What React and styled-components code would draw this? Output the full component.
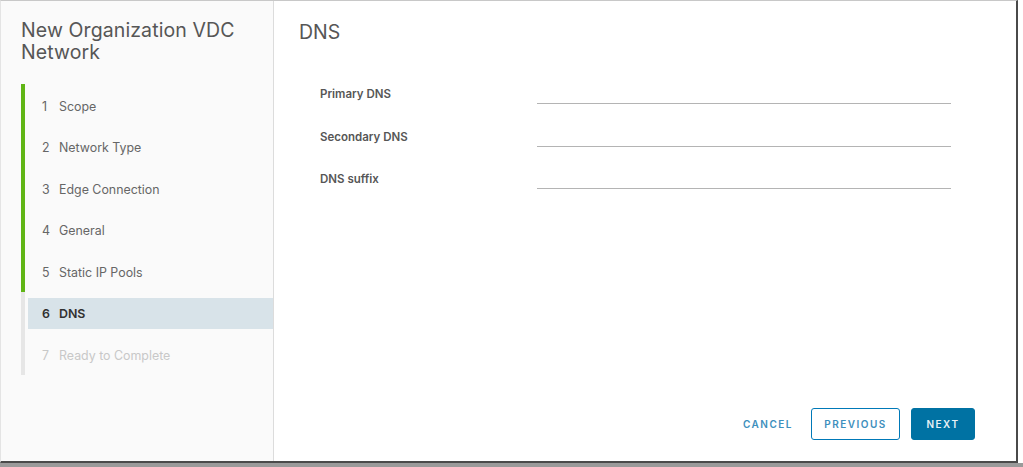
import styled, { createGlobalStyle } from 'styled-components';

const GlobalStyle = createGlobalStyle`
  html, body {
    margin: 0;
    padding: 0;
    background: #ffffff;
  }
  body {
    font-family: Inter, "Noto Sans", sans-serif;
    color: #565656;
  }
`;

const Page = styled.div`
  width: 1023px;
  height: 467px;
  overflow: hidden;
  background: linear-gradient(to bottom, #ffffff 0, #ffffff 463px, #9a9a9a 463px);
`;

const Modal = styled.div`
  display: flex;
  width: 1015px;
  height: 460px;
  background: #ffffff;
  border-top: 1px solid #c8c8c8;
  border-left: 1px solid #e4e4e4;
  border-right: 2px solid #4a4a4a;
  border-bottom: 2px solid #4a4a4a;
`;

const Sidebar = styled.nav`
  width: 252px;
  flex-shrink: 0;
  padding: 18px 0 0 20px;
  background: #fafafa;
  border-right: 1px solid #dcdcdc;
`;

const WizardTitle = styled.h2`
  margin: 0 0 21px;
  font-size: 19.5px;
  line-height: 22px;
  font-weight: 400;
  color: #565656;
  letter-spacing: 0.1px;
`;

const Steps = styled.ol`
  list-style: none;
  margin: 0;
  padding: 0;
`;

const Step = styled.li`
  height: 41.5px;
  padding: 6px 0 4px;
  box-sizing: border-box;
  border-left: 4px solid ${({ $done }) => ($done ? '#60b515' : '#e6e6e6')};
`;

const StepInner = styled.div`
  display: flex;
  align-items: center;
  height: 100%;
  margin-left: 3px;
  padding-left: 14px;
  padding-top: 1px;
  box-sizing: border-box;
  font-size: 12.4px;
  background: ${({ $active }) => ($active ? '#d8e3e9' : 'transparent')};
  color: ${({ $active, $disabled }) =>
    $active ? '#313131' : $disabled ? '#c8c8c8' : '#666666'};
  font-weight: ${({ $active }) => ($active ? 600 : 400)};
`;

const StepNumber = styled.span`
  width: 17px;
`;

const Content = styled.section`
  flex: 1;
  display: flex;
  flex-direction: column;
  padding: 18px 41px 21px 25px;
`;

const PageTitle = styled.h3`
  margin: 0;
  font-size: 19.5px;
  line-height: 26px;
  font-weight: 400;
  color: #565656;
`;

const Form = styled.form`
  display: flex;
  flex-direction: column;
  gap: 14.5px;
  margin-top: 36px;
  padding-left: 21px;
`;

const Row = styled.div`
  display: flex;
  align-items: center;
  height: 28px;
`;

const Label = styled.label`
  width: 217px;
  margin-top: -2px;
  font-size: 11.5px;
  font-weight: 600;
  color: #565656;
`;

const Input = styled.input`
  align-self: flex-start;
  width: 414px;
  height: 22px;
  padding: 0;
  border: none;
  border-bottom: 1px solid #b4b4b4;
  background: transparent;
  outline: none;
  font-family: inherit;
`;

const Footer = styled.div`
  margin-top: auto;
  display: flex;
  justify-content: flex-end;
  align-items: center;
  gap: 11px;
`;

const Button = styled.button`
  height: 32px;
  padding: ${({ $variant }) => ($variant === 'link' ? '0 6px' : '0 11px')};
  box-sizing: border-box;
  font-family: inherit;
  font-size: 10px;
  font-weight: 600;
  letter-spacing: 1.5px;
  border-radius: 3px;
  cursor: pointer;
  border: 1px solid
    ${({ $variant }) => ($variant === 'outline' ? '#0079b8' : $variant === 'primary' ? '#0072a3' : 'transparent')};
  background: ${({ $variant }) => ($variant === 'primary' ? '#0072a3' : 'transparent')};
  color: ${({ $variant }) => ($variant === 'primary' ? '#e8f1f6' : '#3d8fbd')};
  min-width: ${({ $width }) => $width}px;
`;

const steps = [
  { n: 1, label: 'Scope', done: true },
  { n: 2, label: 'Network Type', done: true },
  { n: 3, label: 'Edge Connection', done: true },
  { n: 4, label: 'General', done: true },
  { n: 5, label: 'Static IP Pools', done: true },
  { n: 6, label: 'DNS', active: true },
  { n: 7, label: 'Ready to Complete', disabled: true },
];

const fields = ['Primary DNS', 'Secondary DNS', 'DNS suffix'];

export default function App() {
  return (
    <>
      <GlobalStyle />
      <Page>
        <Modal>
          <Sidebar>
            <WizardTitle>New Organization VDC Network</WizardTitle>
            <Steps>
              {steps.map((s) => (
                <Step key={s.n} $done={s.done}>
                  <StepInner $active={s.active} $disabled={s.disabled}>
                    <StepNumber>{s.n}</StepNumber>
                    {s.label}
                  </StepInner>
                </Step>
              ))}
            </Steps>
          </Sidebar>
          <Content>
            <PageTitle>DNS</PageTitle>
            <Form onSubmit={(e) => e.preventDefault()}>
              {fields.map((f) => (
                <Row key={f}>
                  <Label>{f}</Label>
                  <Input type="text" />
                </Row>
              ))}
            </Form>
            <Footer>
              <Button type="button" $variant="link" $width={0}>CANCEL</Button>
              <Button type="button" $variant="outline" $width={89}>PREVIOUS</Button>
              <Button type="button" $variant="primary" $width={64}>NEXT</Button>
            </Footer>
          </Content>
        </Modal>
      </Page>
    </>
  );
}
